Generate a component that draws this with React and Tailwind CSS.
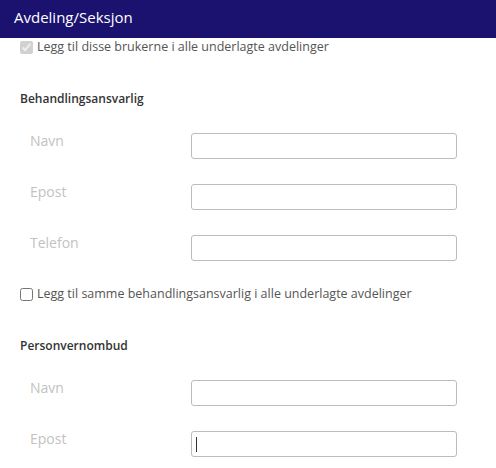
import { useState } from 'react';

const Field = ({ label, showCaret }) => {
    const [value, setValue] = useState('');
    return (
        <div className="flex items-start pl-[30px]">
            <label className="w-[161px] text-[14px] leading-[18px] text-[#c2c2c2] -mt-px">{label}</label>
            <div className="relative">
                <input
                    type="text"
                    value={value}
                    onChange={e => setValue(e.target.value)}
                    className="block w-[266px] h-[26px] border border-[#bcbcbc] rounded-[3px] px-1 text-[13px] text-[#333] outline-none"
                />
                {showCaret && !value && (
                    <span className="absolute left-[5px] top-[6px] w-px h-[15px] bg-[#333]" />
                )}
            </div>
        </div>
    );
};

const Section = ({ title, fields, caretLast }) => (
    <div>
        <h2 className="pl-5 text-[12px] leading-[20px] font-semibold text-[#333]">{title}</h2>
        <div className="mt-6 flex flex-col gap-[25px]">
            {fields.map((f, i) => (
                <Field key={f} label={f} showCaret={caretLast && i === fields.length - 1} />
            ))}
        </div>
    </div>
);

const App = () => {
    return (
        <div className="w-[496px] h-[468px] overflow-hidden bg-white" style={{ fontFamily: '"Open Sans", sans-serif' }}>
            <div className="h-[38px] bg-[#1b1270] flex items-center px-[14px] pb-[3px]">
                <h1 className="text-[15px] font-medium text-white">Avdeling/Seksjon</h1>
            </div>

            <label className="flex items-center pl-5 h-[18px] text-[12.5px] text-[#555]">
                <input type="checkbox" checked disabled readOnly className="w-[13px] h-[13px] mr-1" />
                Legg til disse brukerne i alle underlagte avdelinger
            </label>

            <div className="mt-[33px]">
                <Section title="Behandlingsansvarlig" fields={['Navn', 'Epost', 'Telefon']} />
            </div>

            <label className="mt-6 flex items-center pl-5 h-[18px] text-[12.5px] text-[#555]">
                <input type="checkbox" className="w-[13px] h-[13px] mr-1" />
                Legg til samme behandlingsansvarlig i alle underlagte avdelinger
            </label>

            <div className="mt-[33px]">
                <Section title="Personvernombud" fields={['Navn', 'Epost']} caretLast />
            </div>
        </div>
    );
};

export default App;
